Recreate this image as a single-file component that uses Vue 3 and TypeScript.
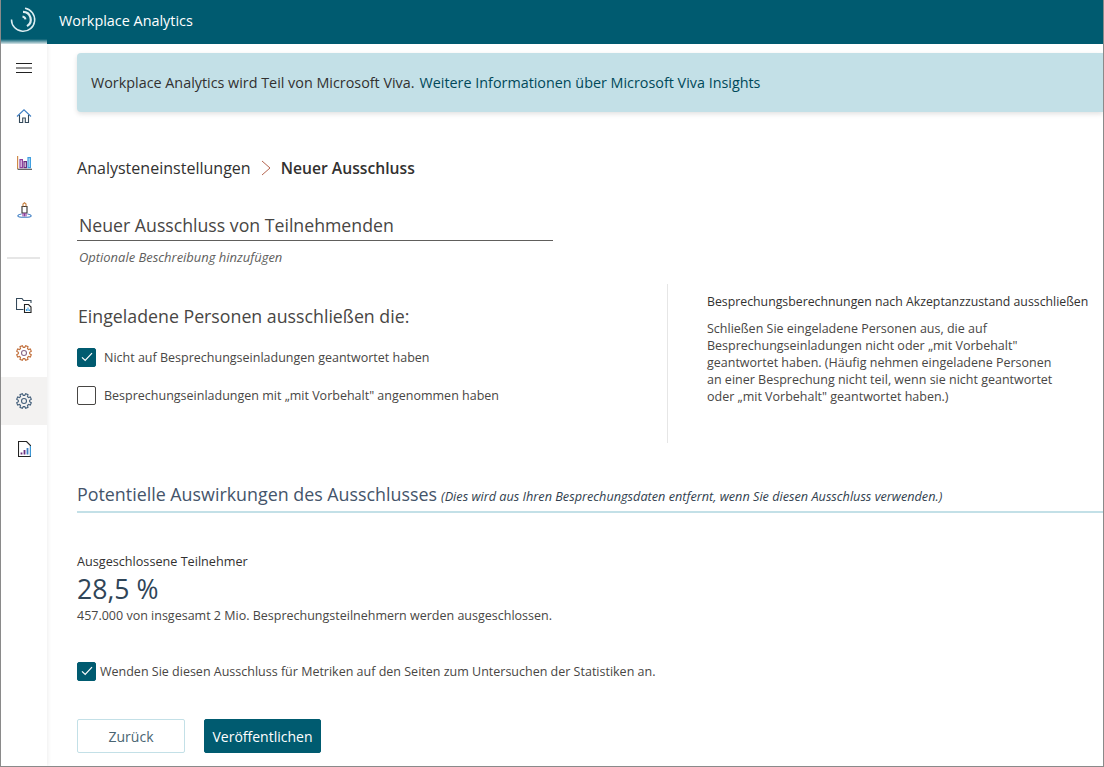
<template>
  <div class="window">
    <header class="topbar">
      <div class="logo-cell">
        <svg width="26" height="26" viewBox="0 0 26 26" fill="none" stroke="#dcedf1">
          <path d="M15 1.300a11.600 11.600 0 1 1-13.500 11.200" stroke-width="1.500" />
          <path d="M13 4.800a7.700 7.700 0 0 1 4 14.300" stroke-width="2.200" />
          <path d="M12.500 9.400a3.600 3.600 0 0 1 3 3" stroke-width="2" />
        </svg>
      </div>
      <span class="product">Workplace Analytics</span>
    </header>

    <div class="shell">
      <nav class="sidebar">
        <div class="nav-item nav-menu">
          <svg width="16" height="12" viewBox="0 0 16 12" stroke="#222" fill="none">
            <path d="M0 1.500h16M0 6h16M0 10.500h16" />
          </svg>
        </div>
        <div class="nav-item">
          <svg width="16" height="16" viewBox="0 0 16 16" fill="none" stroke-width="1.100">
            <path d="M1 8.500 8 1.800l7 6.700" stroke="#3f7fc4" />
            <path d="M3.500 7v7.500h3.200v-4.500h2.600v4.500h3.200V7" stroke="#34495a" />
          </svg>
        </div>
        <div class="nav-item">
          <svg width="15" height="14" viewBox="0 0 15 14" fill="none" stroke-width="1.200">
            <path d="M.6 0v13" stroke="#d08a4a" />
            <path d="M.6 13.300H15" stroke="#555" />
            <rect x="3" y="3.600" width="2.400" height="8" fill="#e6d3ea" stroke="#8e3f9e" />
            <rect x="7" y="5.600" width="2.400" height="6" fill="#e6d3ea" stroke="#6a2f7e" />
            <rect x="11" y="1.600" width="2.400" height="10" fill="#bfe0f6" stroke="#3f9fe0" />
          </svg>
        </div>
        <div class="nav-item">
          <svg width="15" height="16" viewBox="0 0 15 16" fill="none" stroke-width="1.100">
            <path d="M5 4.500h5v6.500H5z" stroke="#333" />
            <path d="M6 4.500V2L7.500.8 9 2v2.500" stroke="#c9803f" />
            <path d="M6 11v3.500M9 11v3.500M7.500 11v3.500" stroke="#8e3f9e" />
            <path d="M4.500 12C2 12.400.8 13.200.8 14s2.500 1.300 6.700 1.300 6.700-.5 6.700-1.300-1.200-1.600-3.700-2" stroke="#3f7fc4" />
          </svg>
        </div>
        <div class="nav-divider"></div>
        <div class="nav-item wide">
          <svg width="16" height="16" viewBox="0 0 16 16" fill="none" stroke-width="1.100">
            <path d="M7.500 12.500H.5v-11h5.500l1.500 2h7.500v2.500" stroke="#34495a" />
            <path d="M8.500 7.500h4l2.500 2.500v5.500H8.500z" stroke="#222" />
            <path d="M10.500 14v-2M12 14v-3.500M13.500 14v-1.500" stroke="#3f9fe0" />
          </svg>
        </div>
        <div class="nav-item wide">
          <svg width="16" height="16" viewBox="0 0 16 16" fill="none" stroke="#c2703d" stroke-width="1.100">
            <path :d="gearPath" />
            <circle cx="8" cy="8" r="2.500" stroke="#8a6a8a" />
          </svg>
        </div>
        <div class="nav-item wide active">
          <svg width="16" height="16" viewBox="0 0 16 16" fill="none" stroke="#46617c" stroke-width="1.100">
            <path :d="gearPath" />
            <circle cx="8" cy="8" r="2.500" />
          </svg>
        </div>
        <div class="nav-item wide">
          <svg width="13" height="16" viewBox="0 0 13 16" fill="none" stroke-width="1.100">
            <path d="M.5.5h8l4 4v11H.5z" stroke="#222" />
            <path d="M12.400 5v10.500" stroke="#3f9fe0" />
            <path d="M3.500 13.500v-2M6.500 13.500V9" stroke="#6a2f7e" stroke-width="1.800" />
            <path d="M9.500 13.500V7" stroke="#3f7fc4" stroke-width="1.800" />
          </svg>
        </div>
      </nav>

      <main class="content">
        <div class="banner">
          Workplace Analytics wird Teil von Microsoft Viva.
          <a class="banner-link">Weitere Informationen über Microsoft Viva Insights</a>
        </div>

        <div class="breadcrumb">
          <span>Analysteneinstellungen</span>
          <svg width="10" height="16" viewBox="0 0 10 16" fill="none">
            <path d="M1 1l8 7-8 7" stroke="#b5654f" />
          </svg>
          <strong>Neuer Ausschluss</strong>
        </div>

        <div class="title-field">Neuer Ausschluss von Teilnehmenden</div>
        <p class="description">Optionale Beschreibung hinzufügen</p>

        <section class="options">
          <div class="options-left">
            <h2 class="options-title">Eingeladene Personen ausschließen die:</h2>
            <label v-for="opt in options" :key="opt.text" class="check-row">
              <span class="box" :class="{ checked: opt.checked }">
                <svg v-if="opt.checked" width="12" height="10" viewBox="0 0 12 10" fill="none">
                  <path d="M1 5.300 4.200 8.500 11 1.200" stroke="#fff" stroke-width="1.200" />
                </svg>
              </span>
              {{ opt.text }}
            </label>
          </div>
          <aside class="options-help">
            <h3 class="help-title">Besprechungsberechnungen nach Akzeptanzzustand ausschließen</h3>
            <p class="help-text">
              Schließen Sie eingeladene Personen aus, die auf<br />
              Besprechungseinladungen nicht oder „mit Vorbehalt"<br />
              geantwortet haben. (Häufig nehmen eingeladene Personen<br />
              an einer Besprechung nicht teil, wenn sie nicht geantwortet<br />
              oder „mit Vorbehalt" geantwortet haben.)
            </p>
          </aside>
        </section>

        <div class="impact-head">
          <span class="impact-title">Potentielle Auswirkungen des Ausschlusses</span>
          <em class="impact-note">(Dies wird aus Ihren Besprechungsdaten entfernt, wenn Sie diesen Ausschluss verwenden.)</em>
        </div>

        <div class="stat">
          <div class="stat-label">Ausgeschlossene Teilnehmer</div>
          <div class="stat-value">28,5 %</div>
          <div class="stat-note">457.000 von insgesamt 2 Mio. Besprechungsteilnehmern werden ausgeschlossen.</div>
        </div>

        <label class="check-row apply-row">
          <span class="box checked">
            <svg width="12" height="10" viewBox="0 0 12 10" fill="none">
              <path d="M1 5.300 4.200 8.500 11 1.200" stroke="#fff" stroke-width="1.200" />
            </svg>
          </span>
          Wenden Sie diesen Ausschluss für Metriken auf den Seiten zum Untersuchen der Statistiken an.
        </label>

        <div class="actions">
          <button class="btn btn-back">Zurück</button>
          <button class="btn btn-primary">Veröffentlichen</button>
        </div>
      </main>
    </div>
  </div>
</template>

<script setup lang="ts">
interface ExclusionOption {
  text: string
  checked: boolean
}

const options: ExclusionOption[] = [
  { text: 'Nicht auf Besprechungseinladungen geantwortet haben', checked: true },
  { text: 'Besprechungseinladungen mit „mit Vorbehalt" angenommen haben', checked: false }
]

// Zahnrad mit acht Zacken
function buildGear(): string {
  const pts: string[] = []
  for (let i = 0; i < 8; i++) {
    const a = (i * Math.PI) / 4 + Math.PI / 8
    const spread = [-0.26, -0.17, 0.17, 0.26]
    const radius = [5.7, 7.5, 7.5, 5.7]
    spread.forEach((s, j) => {
      const x = 8 + radius[j] * Math.cos(a + s)
      const y = 8 + radius[j] * Math.sin(a + s)
      pts.push(`${x.toFixed(2)} ${y.toFixed(2)}`)
    })
  }
  return `M${pts.join('L')}Z`
}

const gearPath = buildGear()
</script>

<style>
html,
body {
  margin: 0;
  background: #fff;
}
</style>

<style scoped>
.window {
  box-sizing: border-box;
  width: 1104px;
  height: 767px;
  overflow: hidden;
  display: flex;
  flex-direction: column;
  border-left: 1px solid #8a8a8a;
  border-right: 1px solid #8a8a8a;
  border-bottom: 1px solid #8a8a8a;
  font-family: "Open Sans", "Noto Sans", sans-serif;
  color: #323130;
  background: #fff;
}

.topbar {
  flex: none;
  height: 44px;
  display: flex;
  align-items: center;
  background: #005b70;
  color: #fff;
}

.logo-cell {
  position: relative;
  box-sizing: border-box;
  width: 58px;
  height: 44px;
  padding: 7px 0 0 9px;
}

/* heller Verlauf unter dem Logo */
.logo-cell::after {
  content: '';
  position: absolute;
  left: 0;
  bottom: 0;
  width: 46px;
  height: 5px;
  background: linear-gradient(rgba(255, 255, 255, 0), rgba(255, 255, 255, 0.85));
}

.product {
  padding-bottom: 4px;
  font-size: 14.4px;
}

.shell {
  flex: 1;
  min-height: 0;
  display: flex;
}

.sidebar {
  flex: none;
  width: 46px;
  display: flex;
  flex-direction: column;
  align-items: stretch;
  background: #fff;
  box-shadow: 1px 0 4px rgba(0, 0, 0, 0.07);
}

.nav-item {
  height: 47px;
  display: flex;
  align-items: center;
  justify-content: center;
}

.nav-menu,
.nav-item.wide {
  height: 48px;
}

.nav-item.active {
  background: #f3f2f1;
}

.nav-divider {
  height: 2px;
  margin: 24px 7px 22px 6px;
  background: #e6e6e6;
}

.content {
  flex: 1;
  min-width: 0;
  padding: 9px 0 0 30px;
}

.banner {
  height: 59px;
  box-sizing: border-box;
  padding-left: 14px;
  display: flex;
  align-items: center;
  gap: 5px;
  background: #c3e0e7;
  border-radius: 4px 0 0 4px;
  box-shadow: 0 2px 5px rgba(0, 0, 0, 0.12);
  font-size: 14.35px;
  white-space: nowrap;
}

.banner-link {
  color: #00495a;
}

.breadcrumb {
  margin-top: 44px;
  height: 24px;
  display: flex;
  align-items: center;
  gap: 10px;
  font-size: 16.05px;
}

.breadcrumb strong {
  font-size: 15.7px;
  font-weight: 600;
}

.title-field {
  margin-top: 32px;
  width: 476px;
  height: 29px;
  box-sizing: border-box;
  padding-left: 2px;
  border-bottom: 1px solid #605e5c;
  font-size: 17.7px;
  line-height: 26px;
  color: #484644;
}

.description {
  margin: 8px 0 0;
  padding-left: 2px;
  font-size: 12.95px;
  line-height: 16px;
  font-style: italic;
  color: #605e5c;
}

.options {
  margin-top: 19px;
  display: flex;
  height: 159px;
}

.options-left {
  width: 590px;
  padding-top: 20px;
  box-sizing: border-box;
}

.options-title {
  margin: 0 0 19px 1px;
  font-size: 17.75px;
  line-height: 24px;
  font-weight: 400;
  color: #484644;
}

.check-row {
  display: flex;
  align-items: center;
  gap: 8px;
  height: 20px;
  margin-bottom: 18px;
  font-size: 12.5px;
  color: #484644;
  white-space: nowrap;
}

.box {
  flex: none;
  box-sizing: border-box;
  width: 19px;
  height: 19px;
  border: 1px solid #484644;
  border-radius: 2px;
  display: flex;
  align-items: center;
  justify-content: center;
}

.box.checked {
  background: #005b70;
  border-color: #005b70;
}

.options-help {
  border-left: 1px solid #e6e6e6;
  padding: 9px 0 0 39px;
  white-space: nowrap;
}

.help-title {
  margin: 0 0 10px;
  font-size: 12.3px;
  line-height: 17px;
  font-weight: 500;
  color: #323130;
}

.help-text {
  margin: 0;
  font-size: 12.5px;
  line-height: 17px;
  color: #484644;
}

.impact-head {
  margin-top: 38px;
  height: 32px;
  box-sizing: border-box;
  border-bottom: 2px solid #c3e0e7;
  display: flex;
  align-items: baseline;
  gap: 4px;
  white-space: nowrap;
}

.impact-title {
  font-size: 17.85px;
  line-height: 26px;
  color: #44546a;
}

.impact-note {
  font-size: 12.7px;
  color: #323f4f;
}

.stat {
  margin-top: 40px;
}

.stat-label {
  margin-bottom: 2px;
  font-size: 12.65px;
  line-height: 17px;
  font-weight: 500;
}

.stat-value {
  font-size: 26.6px;
  line-height: 35px;
  color: #2f4558;
}

.stat-note {
  font-size: 12.5px;
  line-height: 18px;
  color: #484644;
}

.apply-row {
  margin-top: 36px;
  margin-bottom: 0;
  gap: 4px;
}

.actions {
  margin-top: 38px;
  display: flex;
  gap: 19px;
}

.btn {
  height: 34px;
  box-sizing: border-box;
  border-radius: 2px;
  font-family: inherit;
  font-size: 14px;
  padding: 0;
}

.btn-back {
  width: 108px;
  background: #fff;
  border: 1px solid #c3e0e7;
  color: #4a6572;
}

.btn-primary {
  width: 117px;
  background: #005b70;
  border: 1px solid #005b70;
  color: #fff;
}
</style>
